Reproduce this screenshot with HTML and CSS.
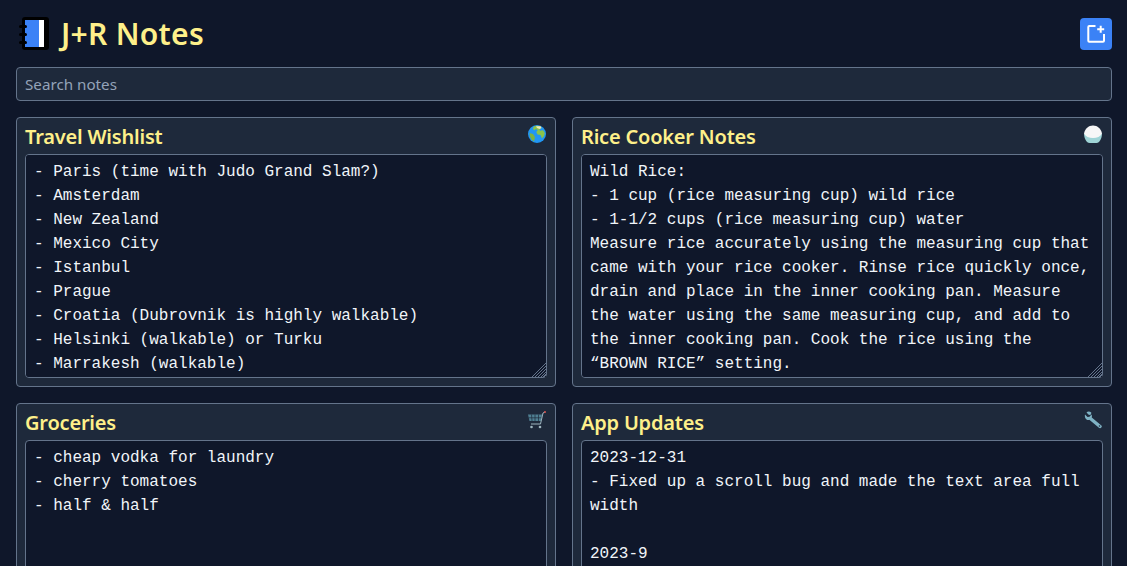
FILE: index.html
```html
<!DOCTYPE html>
<html lang="en">
  <head>
    <meta charset="UTF-8" />
    <title>J+R Notes</title>
    <link rel="stylesheet" href="styles.css">
  </head>
  <body>
    <header class="top-bar">
      <div class="brand">
        <svg class="brand-icon" viewBox="0 0 32 34" width="32" height="34" aria-hidden="true">
          <rect x="4" y="0" width="27" height="33" rx="3" fill="#000"/>
          <rect x="7" y="3" width="14" height="27" fill="#3b82f6"/>
          <rect x="21" y="3" width="5" height="27" fill="#fff"/>
          <rect x="1" y="8" width="8" height="3" rx="1.500" fill="#000"/>
          <rect x="1" y="16" width="8" height="3" rx="1.500" fill="#000"/>
          <rect x="1" y="24" width="8" height="3" rx="1.500" fill="#000"/>
        </svg>
        <h1>J+R Notes</h1>
      </div>
      <button class="new-btn" aria-label="New note">
        <svg viewBox="0 0 24 24" width="24" height="24" fill="none" stroke="#fff" stroke-width="2" aria-hidden="true">
          <path d="M11.500 4H5.300a1 1 0 0 0-1 1v13.700a1 1 0 0 0 1 1H19a1 1 0 0 0 1-1V12"/>
          <path d="M16.700 3.800v7M13.200 7.300h7"/>
        </svg>
      </button>
    </header>

    <input class="search" type="text" placeholder="Search notes" />

    <main class="notes">
      <section class="note">
        <div class="note-head">
          <h2>Travel Wishlist</h2>
          <svg class="note-icon" viewBox="0 0 18 18" width="18" height="18" aria-hidden="true">
            <circle cx="9" cy="9" r="9" fill="#2196f3"/>
            <path d="M6 1.500c2-1 4.500-1 6.500-.2l1 1.700-2 1.300 .5 1.500 3-.5 1.800 2.700-.8 3-2 2.500-1.500-3.500-3-.5-1.200-2.500 1.500-2-2-1-1.500 1.500-1.500-2z" fill="#8bc34a"/>
            <path d="M1.500 8l3.500 1 2 3-1 4.500-2.500-2L2 11.500z" fill="#7cb342"/>
            <path d="M8 1.200l4.500 0 1 1.800-2 1-2.500-1z" fill="#f0e6b8"/>
          </svg>
        </div>
        <textarea class="note-body" spellcheck="false">- Paris (time with Judo Grand Slam?)
- Amsterdam
- New Zealand
- Mexico City
- Istanbul
- Prague
- Croatia (Dubrovnik is highly walkable)
- Helsinki (walkable) or Turku
- Marrakesh (walkable)</textarea>
      </section>

      <section class="note">
        <div class="note-head">
          <h2>Rice Cooker Notes</h2>
          <svg class="note-icon" viewBox="0 0 18 18" width="18" height="18" aria-hidden="true">
            <path d="M0 8.500h18c0 4.500-2.500 9.500-5.500 9.500h-7C2.500 18 0 13 0 8.500z" fill="#9fd4d6"/>
            <path d="M0 8.500C1 3.500 4.500 .5 9 .5s8 3 9 8c-1.500 3-5 4.500-9 4.500s-7.500-1.500-9-4.500z" fill="#f7f7f7"/>
          </svg>
        </div>
        <textarea class="note-body" spellcheck="false">Wild Rice:
- 1 cup (rice measuring cup) wild rice
- 1-1/2 cups (rice measuring cup) water
Measure rice accurately using the measuring cup that came with your rice cooker. Rinse rice quickly once, drain and place in the inner cooking pan. Measure the water using the same measuring cup, and add to the inner cooking pan. Cook the rice using the “BROWN RICE” setting.</textarea>
      </section>

      <section class="note">
        <div class="note-head">
          <h2>Groceries</h2>
          <svg class="note-icon" viewBox="0 0 18 18" width="18" height="18" aria-hidden="true">
            <path d="M0 3.500h14l-1 6.500H1.500z" fill="#4f7f92"/>
            <path d="M3.500 3.500l.5 6.500M7 3.500V10M10.500 3.500V10M.5 6.800h13" stroke="#1e293b" stroke-width=".7"/>
            <path d="M17 1l-2 1-2.500 11H3" fill="none" stroke="#9fb6c0" stroke-width="1"/>
            <circle cx="17" cy="1" r="1" fill="#d9534f"/>
            <circle cx="3.500" cy="16" r="1.300" fill="#9fb6c0"/>
            <circle cx="12" cy="16" r="1.300" fill="#9fb6c0"/>
          </svg>
        </div>
        <textarea class="note-body" spellcheck="false">- cheap vodka for laundry
- cherry tomatoes
- half &amp; half</textarea>
      </section>

      <section class="note">
        <div class="note-head">
          <h2>App Updates</h2>
          <svg class="note-icon" viewBox="0 0 18 18" width="18" height="18" aria-hidden="true">
            <path d="M7 8l9 7.500" stroke="#7fb2c4" stroke-width="3.400" stroke-linecap="round"/>
            <path d="M2.500 1.500L5 4l2-.5.300-2C5.500 0 3.500 .3 2.500 1.500zM1 3.500l2.500 2.500 2-.2L7.500 3.500c.8 1.500 .5 3.500-.5 4.500s-3 1.500-4.500 .5S.5 5 1 3.500z" fill="#7fb2c4"/>
            <circle cx="15.500" cy="15" r=".8" fill="#1e293b"/>
          </svg>
        </div>
        <textarea class="note-body" spellcheck="false">2023-12-31
- Fixed up a scroll bug and made the text area full width

2023-9</textarea>
      </section>
    </main>
  </body>
</html>
```

FILE: styles.css
```css
* {
  box-sizing: border-box;
}
html,
body {
  height: 100%;
  overflow: hidden;
}
body {
  margin: 0;
  padding: 16px 15px 16px 16px;
  background-color: #0f172a;
  font-family: "Noto Sans", sans-serif;
}
.top-bar {
  display: flex;
  align-items: center;
  justify-content: space-between;
  height: 35px;
  margin-bottom: 16px;
}
.brand {
  display: flex;
  align-items: center;
  gap: 11px;
  padding-left: 2px;
}
.brand h1 {
  margin: 0;
  font-size: 30px;
  font-weight: 600;
  letter-spacing: 0.3px;
  color: #fef08a;
}
.new-btn {
  display: flex;
  align-items: center;
  justify-content: center;
  width: 32px;
  height: 32px;
  padding: 0;
  border: none;
  border-radius: 4px;
  background-color: #3b82f6;
}
.search {
  display: block;
  width: 100%;
  height: 34px;
  padding: 0 8px;
  border: 1px solid #64748b;
  border-radius: 4px;
  background-color: #1e293b;
  color: #f1f5f9;
  font-family: inherit;
  font-size: 15.2px;
}
.search::placeholder {
  color: #94a3b8;
}
.notes {
  display: grid;
  grid-template-columns: 1fr 1fr;
  grid-auto-rows: 270px;
  gap: 16px;
  margin-top: 16px;
}
.note {
  display: flex;
  flex-direction: column;
  padding: 8px;
  border: 1px solid #64748b;
  border-radius: 4px;
  background-color: #1e293b;
}
.note-head {
  display: flex;
  align-items: flex-start;
  justify-content: space-between;
  height: 28px;
}
.note-head h2 {
  margin: 0;
  font-size: 20px;
  line-height: 22px;
  font-weight: 600;
  letter-spacing: -0.2px;
  color: #fef08a;
}
.note-icon {
  flex: none;
  margin: -1px 1px 0 0;
}
.note-body {
  display: block;
  flex: 1;
  width: 100%;
  padding: 5px 8px 3px;
  border: 1px solid #64748b;
  border-radius: 4px;
  background-color: #0f172a;
  color: #f1f5f9;
  font-family: "Liberation Mono", monospace;
  font-size: 16px;
  line-height: 24px;
}
/* lighter corner hatch, default one is too dark */
.note-body::-webkit-resizer {
  background:
    linear-gradient(to bottom right, #0f172a 50%, transparent 50%),
    repeating-linear-gradient(135deg, #0f172a 0 1px, #64748b 1px 2px);
}
```
